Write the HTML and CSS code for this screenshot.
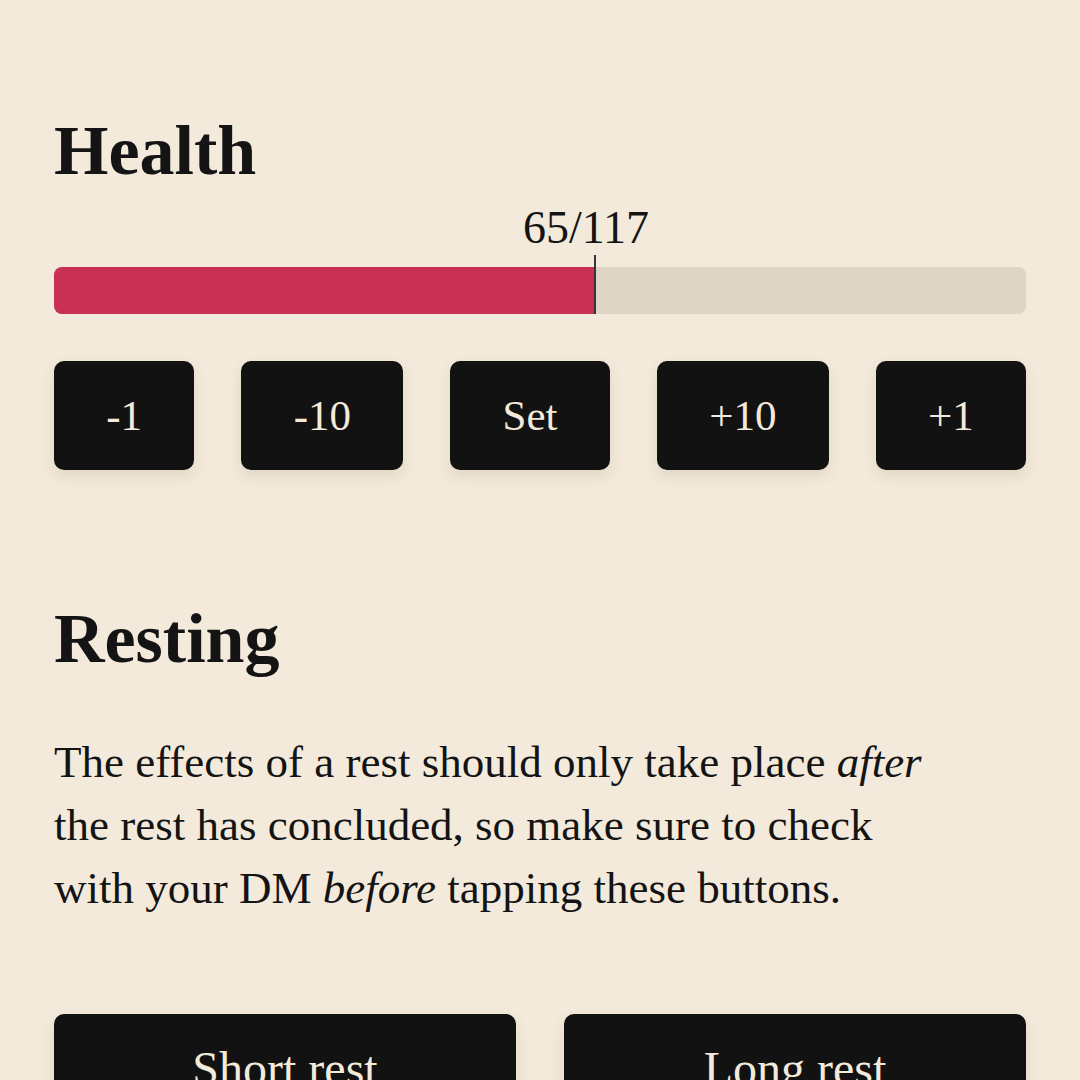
FILE: index.html
```html
<!DOCTYPE html>
<html lang="en">
<head>
<meta charset="utf-8">
<title>Health</title>
<link rel="stylesheet" href="styles.css">
</head>
<body>
<main class="page">
  <section class="health">
    <h2 class="title">Health</h2>
    <div class="value-row">
      <div class="value-anchor" style="margin-left: calc(55.56% - 8px);"><span class="value">65/117</span></div>
    </div>
    <div class="bar">
      <div class="bar-fill" style="width: 55.56%;"></div>
    </div>
    <div class="hp-buttons">
      <button class="btn">-1</button>
      <button class="btn">-10</button>
      <button class="btn">Set</button>
      <button class="btn">+10</button>
      <button class="btn">+1</button>
    </div>
  </section>
  <section class="resting">
    <h2 class="title">Resting</h2>
    <p class="note">The effects of a rest should only take place <em>after</em><br>the rest has concluded, so make sure to check<br>with your DM <em>before</em> tapping these buttons.</p>
    <div class="rest-buttons">
      <button class="btn btn-rest">Short rest</button>
      <button class="btn btn-rest">Long rest</button>
    </div>
  </section>
</main>
</body>
</html>
```
FILE: styles.css
```css
* { box-sizing: border-box; }
html, body { margin: 0; padding: 0; }
body {
  background: #f3eadb;
  color: #141414;
  font-family: "Liberation Serif", "Times New Roman", serif;
  overflow: hidden;
}
.page {
  padding: 116px 54px 0;
  display: flex;
  flex-direction: column;
}
.title {
  margin: 0;
  font-size: 70px;
  line-height: 70px;
  font-weight: 700;
  color: #141414;
}
.value-row {
  margin-top: 21px;
  height: 42px;
  display: flex;
}
.value-anchor {
  width: 0;
  display: flex;
  justify-content: center;
}
.value {
  white-space: nowrap;
  font-size: 46px;
  line-height: 42px;
}
.bar {
  margin-top: 18px;
  height: 47px;
  background: #dfd5c4;
  border-radius: 8px;
  display: flex;
}
.bar-fill {
  background: #c93056;
  border-radius: 8px 0 0 8px;
  position: relative;
}
.bar-fill::after {
  content: "";
  position: absolute;
  right: -2px;
  top: -12px;
  bottom: 0;
  width: 2px;
  background: #3a3535;
}
.hp-buttons {
  margin-top: 47px;
  display: flex;
  gap: 47px;
}
.btn {
  font-family: "Liberation Serif", "Times New Roman", serif;
  background: #121212;
  color: #f3eadb;
  border: none;
  border-radius: 10px;
  height: 109px;
  font-size: 43px;
  padding: 0;
  flex: 1 1 auto;
  box-shadow: 0 6px 14px rgba(90, 70, 40, 0.12);
}
.resting {
  margin-top: 134px;
}
.note {
  margin: 57px 0 0;
  font-size: 45px;
  line-height: 63px;
  white-space: nowrap;
}
.note em { font-style: italic; }
.rest-buttons {
  margin-top: 94px;
  display: grid;
  grid-template-columns: 1fr 1fr;
  gap: 48px;
}
.btn-rest {
  height: 109px;
  font-size: 48px;
}
```
